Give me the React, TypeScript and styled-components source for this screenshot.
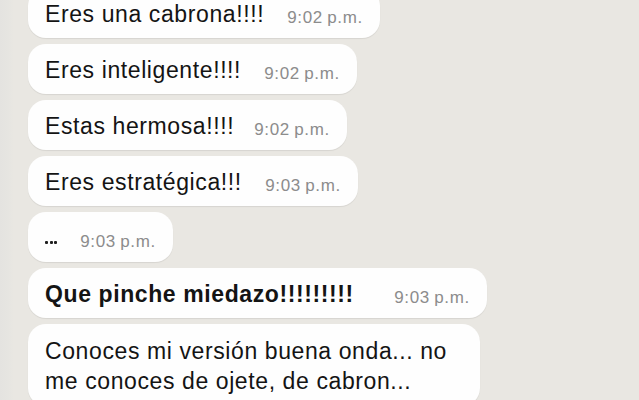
import styled, { createGlobalStyle } from 'styled-components';

const GlobalStyle = createGlobalStyle`
  html, body {
    margin: 0;
    padding: 0;
    background: #e9e7e2;
  }
  body {
    font-family: 'Liberation Sans', Arial, sans-serif;
    -webkit-font-smoothing: antialiased;
  }
`;

const ChatEl = styled.div`
  width: 639px;
  height: 400px;
  overflow: hidden;
  background: linear-gradient(90deg, #e4e3e0 0px, #e6e5e1 8px, #e9e7e2 14px);
`;

const ListEl = styled.div`
  display: flex;
  flex-direction: column;
  align-items: flex-start;
  gap: 6px;
  margin-top: -12px;
  padding-left: 28px;
`;

const BubbleEl = styled.div<{ $w: number; $stacked?: boolean }>`
  box-sizing: border-box;
  width: ${(p) => p.$w}px;
  min-height: 50px;
  display: flex;
  flex-direction: ${(p) => (p.$stacked ? 'column' : 'row')};
  align-items: ${(p) => (p.$stacked ? 'flex-start' : 'flex-end')};
  padding: ${(p) => (p.$stacked ? '12px 20px 10px 17px' : '11px 17px 9px 17px')};
  background: #fefefe;
  border-radius: 18px;
  box-shadow: 0 1px 1px rgba(0, 0, 0, 0.08);
`;

const TextEl = styled.span<{ $bold?: boolean }>`
  font-size: 23px;
  line-height: 30px;
  letter-spacing: 0.6px;
  color: #141414;
  font-weight: ${(p) => (p.$bold ? 700 : 400)};
  white-space: pre-line;
`;

const DotsEl = styled.span`
  display: flex;
  gap: 1.5px;
  margin-bottom: 9px;
`;

const Dot = styled.i`
  display: block;
  width: 3px;
  height: 3px;
  border-radius: 1px;
  background: #1e1e1e;
`;

const TimeEl = styled.span`
  margin-left: auto;
  margin-bottom: 1px;
  font-size: 17px;
  line-height: 20px;
  letter-spacing: 0.7px;
  color: #8c8c8c;
  white-space: nowrap;
`;

type Msg = { text: string; time?: string; w: number; bold?: boolean; stacked?: boolean; dots?: boolean };

const MESSAGES: Msg[] = [
  { text: 'Eres una cabrona!!!!', time: '9:02', w: 352 },
  { text: 'Eres inteligente!!!!', time: '9:02', w: 329 },
  { text: 'Estas hermosa!!!!', time: '9:02', w: 319 },
  { text: 'Eres estratégica!!!', time: '9:03', w: 330 },
  { text: '...', time: '9:03', w: 145, dots: true },
  { text: 'Que pinche miedazo!!!!!!!!!', time: '9:03', w: 459, bold: true },
  {
    // the time of this one falls below the bottom edge
    text: 'Conoces mi versión buena onda... no\nme conoces de ojete, de cabron...',
    w: 452,
    stacked: true,
  },
];

export default function App() {
  return (
    <>
      <GlobalStyle />
      <ChatEl>
        <ListEl>
          {MESSAGES.map((m, i) => (
            <BubbleEl key={i} $w={m.w} $stacked={m.stacked}>
              {m.dots ? (
                <DotsEl aria-label={m.text}>
                  <Dot />
                  <Dot />
                  <Dot />
                </DotsEl>
              ) : (
                <TextEl $bold={m.bold}>{m.text}</TextEl>
              )}
              {m.time && (
                <TimeEl>
                  {m.time}
                  {'\u2009'}p.m.
                </TimeEl>
              )}
            </BubbleEl>
          ))}
        </ListEl>
      </ChatEl>
    </>
  );
}
